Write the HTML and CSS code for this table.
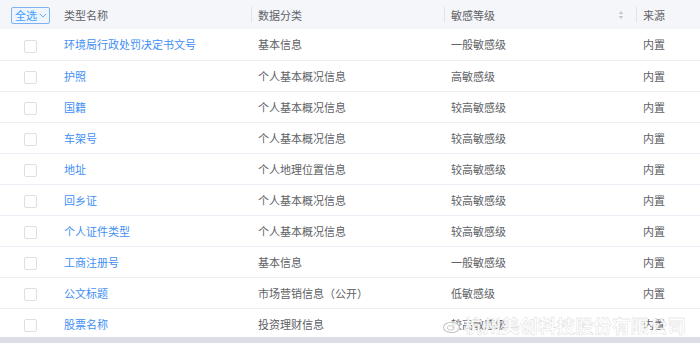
FILE: index.html
```html
<!DOCTYPE html>
<html lang="zh">
<head>
<meta charset="utf-8">
<link rel="stylesheet" href="styles.css">
</head>
<body>
<div class="page">
  <div class="table-wrap">
    <table class="grid">
      <colgroup>
        <col class="c-check"><col class="c-name"><col class="c-cat"><col class="c-level"><col class="c-src">
      </colgroup>
      <thead>
        <tr>
          <th class="center"><span class="select-all">全选<svg class="chev" viewBox="0 0 10 6" width="8" height="5"><path d="M1 1l4 4 4-4" fill="none" stroke="#409eff" stroke-width="1"/></svg></span></th>
          <th><span class="th-in">类型名称</span></th>
          <th class="div"><span class="th-in">数据分类</span></th>
          <th class="div"><span class="th-in sortable">敏感等级<svg class="sort" viewBox="0 0 6 10" width="6" height="10"><path d="M3 1l2.2 3H0.8z M3 9L0.8 6h4.4z" fill="#c0c4cc"/></svg></span></th>
          <th class="div"><span class="th-in">来源</span></th>
        </tr>
      </thead>
      <tbody>
        <tr><td class="center"><span class="cb"></span></td><td><a class="link">环境局行政处罚决定书文号</a></td><td>基本信息</td><td>一般敏感级</td><td>内置</td></tr>
        <tr><td class="center"><span class="cb"></span></td><td><a class="link">护照</a></td><td>个人基本概况信息</td><td>高敏感级</td><td>内置</td></tr>
        <tr><td class="center"><span class="cb"></span></td><td><a class="link">国籍</a></td><td>个人基本概况信息</td><td>较高敏感级</td><td>内置</td></tr>
        <tr><td class="center"><span class="cb"></span></td><td><a class="link">车架号</a></td><td>个人基本概况信息</td><td>较高敏感级</td><td>内置</td></tr>
        <tr><td class="center"><span class="cb"></span></td><td><a class="link">地址</a></td><td>个人地理位置信息</td><td>较高敏感级</td><td>内置</td></tr>
        <tr><td class="center"><span class="cb"></span></td><td><a class="link">回乡证</a></td><td>个人基本概况信息</td><td>较高敏感级</td><td>内置</td></tr>
        <tr><td class="center"><span class="cb"></span></td><td><a class="link">个人证件类型</a></td><td>个人基本概况信息</td><td>较高敏感级</td><td>内置</td></tr>
        <tr><td class="center"><span class="cb"></span></td><td><a class="link">工商注册号</a></td><td>基本信息</td><td>一般敏感级</td><td>内置</td></tr>
        <tr><td class="center"><span class="cb"></span></td><td><a class="link">公文标题</a></td><td>市场营销信息（公开）</td><td>低敏感级</td><td>内置</td></tr>
        <tr><td class="center"><span class="cb"></span></td><td><a class="link">股票名称</a></td><td>投资理财信息</td><td>较高敏感级</td><td>内置</td></tr>
      </tbody>
    </table>
    <div class="watermark">
      <svg class="wm-logo" viewBox="0 0 22 18" width="21" height="17"><ellipse cx="10" cy="11" rx="8.5" ry="5.5" fill="rgba(255,255,255,0.85)" stroke="#c2c2c2" stroke-width="1.1"/><ellipse cx="9" cy="11.5" rx="3.5" ry="2.5" fill="none" stroke="#c2c2c2" stroke-width="1"/><path d="M14 3.5a5 5 0 0 1 5 5" fill="none" stroke="#c2c2c2" stroke-width="1.1"/></svg>
      <span class="wm-text">杭州美创科技股份有限公司</span>
    </div>
  </div>
  <div class="scrollbar"></div>
</div>
</body>
</html>
```
FILE: styles.css
```css
html, body {
  margin: 0;
  padding: 0;
  background: #fff;
}
body {
  font-family: "Noto Sans CJK SC", "Noto Sans", sans-serif;
  font-size: 11px;
  color: #606266;
}
.page {
  width: 700px;
  height: 343px;
  overflow: hidden;
}
.table-wrap {
  position: relative;
  height: 337px;
  overflow: hidden;
}
.grid {
  width: 700px;
  border-collapse: collapse;
  table-layout: fixed;
}
.c-check { width: 57px; }
.c-name { width: 194px; }
.c-cat { width: 193px; }
.c-level { width: 192px; }
.c-src { width: 64px; }
thead th {
  height: 29px;
  padding: 0 7px;
  background: #f5f6f9;
  font-weight: normal;
  text-align: left;
  color: #5f6268;
  position: relative;
  box-sizing: border-box;
}
th.div::before {
  content: "";
  position: absolute;
  left: 0;
  top: 7px;
  height: 15px;
  width: 1px;
  background: #e1e3e8;
}
.th-in {
  display: flex;
  align-items: center;
  line-height: 14px;
}
.sortable { justify-content: space-between; }
.sort { margin-right: 5px; }
th.center, td.center {
  text-align: center;
  padding: 0 0 0 4px;
}
.select-all {
  display: inline-flex;
  align-items: center;
  gap: 2px;
  height: 15px;
  padding: 0 2px 0 3px;
  border: 1px solid #7fb2f0;
  border-radius: 2px;
  background: #eef5fe;
  color: #409eff;
  font-size: 11px;
  line-height: 15px;
  vertical-align: middle;
}
.chev { margin-top: 1px; }
tbody td {
  height: 31px;
  padding: 0 7px;
  border-bottom: 1px solid #ebeef5;
  box-sizing: border-box;
  white-space: nowrap;
  overflow: hidden;
}
.cb {
  display: inline-block;
  width: 11px;
  height: 11px;
  border: 1px solid #dcdfe6;
  border-radius: 2px;
  background: #fff;
  vertical-align: middle;
}
.link {
  color: #3f8ff5;
  text-decoration: none;
}
.watermark {
  position: absolute;
  left: 442px;
  top: 314px;
  display: flex;
  align-items: center;
  gap: 1px;
}
.wm-text {
  font-size: 18.5px;
  line-height: 22px;
  font-weight: bold;
  color: rgba(255, 255, 255, 0.9);
  -webkit-text-stroke: 0.35px #d2d2d2;
  letter-spacing: 0;
}
.scrollbar {
  height: 6px;
  background: #dcdee5;
}
```
